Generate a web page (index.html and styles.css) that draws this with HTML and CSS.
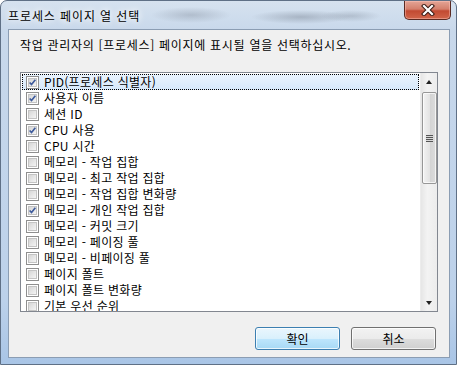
FILE: index.html
```html
<!DOCTYPE html>
<html lang="ko">
<head>
    <meta charset="UTF-8">
    <title>프로세스 페이지 열 선택</title>
    <link rel="stylesheet" href="styles.css">
</head>
<body>
    <div class="window">
        <div class="titlebar">
            <span class="title">프로세스 페이지 열 선택</span>
            <button class="close">
                <svg width="14" height="12" viewBox="0 0 14 12">
                    <path d="M3 2 L11 10 M11 2 L3 10" stroke="#3a1a14" stroke-width="4.2" stroke-linecap="square"/>
                    <path d="M3 2 L11 10 M11 2 L3 10" stroke="#ffffff" stroke-width="2.2" stroke-linecap="square"/>
                </svg>
            </button>
        </div>
        <div class="client">
            <p class="prompt">작업 관리자의 [프로세스] 페이지에 표시될 열을 선택하십시오.</p>
            <div class="listbox">
                <ul class="rows">
                    <li class="row selected"><span class="check"><svg width="11" height="11" viewBox="0 0 11 11"><path d="M2 5.5 L4.3 8 L9 2" fill="none" stroke="#3e5b9c" stroke-width="2"/></svg></span>PID(프로세스 식별자)</li>
                    <li class="row"><span class="check"><svg width="11" height="11" viewBox="0 0 11 11"><path d="M2 5.5 L4.3 8 L9 2" fill="none" stroke="#3e5b9c" stroke-width="2"/></svg></span>사용자 이름</li>
                    <li class="row"><span class="check"></span>세션 ID</li>
                    <li class="row"><span class="check"><svg width="11" height="11" viewBox="0 0 11 11"><path d="M2 5.5 L4.3 8 L9 2" fill="none" stroke="#3e5b9c" stroke-width="2"/></svg></span>CPU 사용</li>
                    <li class="row"><span class="check"></span>CPU 시간</li>
                    <li class="row"><span class="check"></span>메모리 - 작업 집합</li>
                    <li class="row"><span class="check"></span>메모리 - 최고 작업 집합</li>
                    <li class="row"><span class="check"></span>메모리 - 작업 집합 변화량</li>
                    <li class="row"><span class="check"><svg width="11" height="11" viewBox="0 0 11 11"><path d="M2 5.5 L4.3 8 L9 2" fill="none" stroke="#3e5b9c" stroke-width="2"/></svg></span>메모리 - 개인 작업 집합</li>
                    <li class="row"><span class="check"></span>메모리 - 커밋 크기</li>
                    <li class="row"><span class="check"></span>메모리 - 페이징 풀</li>
                    <li class="row"><span class="check"></span>메모리 - 비페이징 풀</li>
                    <li class="row"><span class="check"></span>페이지 폴트</li>
                    <li class="row"><span class="check"></span>페이지 폴트 변화량</li>
                    <li class="row"><span class="check"></span>기본 우선 순위</li>
                </ul>
                <div class="scrollbar">
                    <div class="sb-btn"><span class="arrow-up"></span></div>
                    <div class="sb-track">
                        <div class="thumb"><span class="grip"></span></div>
                    </div>
                    <div class="sb-btn"><span class="arrow-down"></span></div>
                </div>
            </div>
            <div class="buttons">
                <button class="btn btn-default">확인</button>
                <button class="btn">취소</button>
            </div>
        </div>
    </div>
</body>
</html>
```

FILE: styles.css
```css
* {
    box-sizing: border-box;
}
body {
    margin: 0;
    font-family: "Noto Sans CJK KR", "Liberation Sans", sans-serif;
    font-size: 12px;
    color: #000;
    background: #ffffff;
}
.window {
    width: 457px;
    height: 365px;
    display: flex;
    flex-direction: column;
    border: 1px solid #5f7086;
    border-radius: 7px 7px 0 0;
    background:
        radial-gradient(ellipse 40px 8px at 190px 14px, rgba(120, 130, 145, 0.35), transparent),
        radial-gradient(ellipse 50px 7px at 300px 16px, rgba(110, 120, 135, 0.4), transparent),
        radial-gradient(ellipse 30px 6px at 350px 15px, rgba(110, 120, 135, 0.3), transparent),
        linear-gradient(to bottom, #d6e2ef 0, #c8d8eb 30px, #bcd1ea 300px, #a9c5e6 100%);
    overflow: hidden;
}
.titlebar {
    height: 28px;
    display: flex;
    justify-content: space-between;
    align-items: flex-start;
    flex: none;
}
.title {
    margin: 7px 0 0 7px;
    line-height: 15px;
    font-size: 12px;
    letter-spacing: 0.9px;
    text-shadow: 0 0 6px #fff, 0 0 10px #fff;
}
.close {
    width: 47px;
    height: 19px;
    margin-right: 5px;
    padding: 0;
    border: 1px solid #5a2a22;
    border-top: none;
    border-radius: 0 0 5px 5px;
    background: linear-gradient(to bottom, #e4a596 0, #d47f6c 45%, #c24a32 55%, #d1654a 100%);
    box-shadow: inset 0 0 0 1px rgba(255, 200, 190, 0.45);
    display: flex;
    align-items: center;
    justify-content: center;
}
.client {
    flex: 1;
    margin: 0 6px 6px 7px;
    border: 1px solid #8b9db3;
    background: #f0f0f0;
    padding: 8px 11px 0 11px;
}
.prompt {
    margin: 0;
    line-height: 14px;
    letter-spacing: 0.7px;
}
.listbox {
    margin-top: 20px;
    height: 240px;
    border: 1px solid #828790;
    background: #fff;
    display: flex;
}
.rows {
    flex: 1;
    list-style: none;
    margin: 0;
    padding: 1px 1px 0 1px;
    overflow: hidden;
}
.row {
    height: 16px;
    display: flex;
    align-items: center;
    padding-left: 4px;
    line-height: 16px;
    letter-spacing: 0.3px;
    white-space: nowrap;
}
.row.selected {
    background: linear-gradient(to bottom, #eaf3fd, #d6e8fb);
    outline: 1px dotted #000;
    outline-offset: -1px;
}
.check {
    width: 13px;
    height: 13px;
    margin-right: 5px;
    border: 1px solid #8f8f8f;
    background: #fff;
    padding: 1px;
    display: flex;
    align-items: center;
    justify-content: center;
    position: relative;
}
.check::before {
    content: "";
    position: absolute;
    inset: 1px;
    background: linear-gradient(135deg, #d6d6d6, #f4f4f4);
    border: 1px solid #c4c4c4;
}
.check svg {
    position: relative;
}
.scrollbar {
    width: 17px;
    display: flex;
    flex-direction: column;
    background: linear-gradient(to right, #e6e6e6, #f3f3f3 40%, #ececec);
    border-left: 1px solid #ececec;
}
.sb-btn {
    height: 17px;
    display: flex;
    align-items: center;
    justify-content: center;
    flex: none;
}
.arrow-up {
    width: 0;
    height: 0;
    border-left: 3.5px solid transparent;
    border-right: 3.5px solid transparent;
    border-bottom: 4px solid #222;
}
.arrow-down {
    width: 0;
    height: 0;
    border-left: 3.5px solid transparent;
    border-right: 3.5px solid transparent;
    border-top: 4px solid #222;
}
.sb-track {
    flex: 1;
    padding: 2px 0 0 1px;
}
.thumb {
    width: 15px;
    height: 92px;
    border: 1px solid #979797;
    border-radius: 2px;
    background: linear-gradient(to right, #f3f3f3, #e4e4e4 50%, #d3d3d3 51%, #dcdcdc);
    box-shadow: inset 0 0 0 1px rgba(255, 255, 255, 0.7);
    display: flex;
    align-items: center;
    justify-content: center;
}
.grip {
    width: 7px;
    height: 7px;
    background: repeating-linear-gradient(to bottom, #555 0, #555 1px, #d8d8d8 1px, #d8d8d8 2px);
}
.buttons {
    margin-top: 15px;
    padding-right: 2px;
    display: flex;
    justify-content: flex-end;
    gap: 11px;
}
.btn {
    width: 85px;
    height: 23px;
    padding: 0;
    font-family: inherit;
    font-size: 12px;
    color: #000;
    border: 1px solid #707070;
    border-radius: 3px;
    background: linear-gradient(to bottom, #f2f2f2 0, #ebebeb 50%, #dddddd 51%, #cfcfcf 100%);
    box-shadow: inset 0 0 0 1px rgba(255, 255, 255, 0.75);
}
.btn-default {
    border-color: #3c7fb1;
    background: linear-gradient(to bottom, #eaf6fd 0, #d9f0fc 50%, #bee6fd 51%, #a7d9f5 100%);
}
```
